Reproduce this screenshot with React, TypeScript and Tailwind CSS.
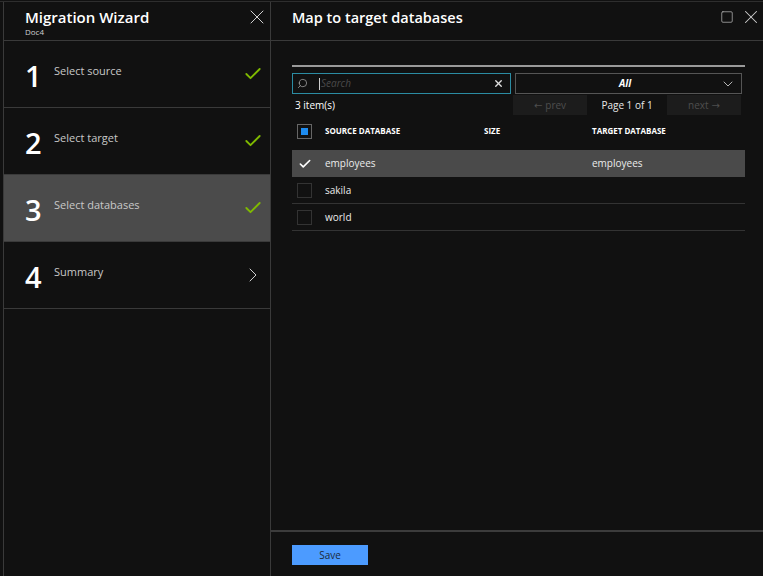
import { Check, ChevronRight, ChevronDown, X, Search, Square } from 'lucide-react';

const font = { fontFamily: '"Open Sans", "Noto Sans", sans-serif' };
const arrowFont = { fontFamily: '"DejaVu Sans", sans-serif' };

const steps = [
  { n: '1', label: 'Select source', done: true },
  { n: '2', label: 'Select target', done: true },
  { n: '3', label: 'Select databases', done: true, active: true },
  { n: '4', label: 'Summary', done: false },
];

const rows = [
  { name: 'employees', target: 'employees', checked: true },
  { name: 'sakila', target: '', checked: false },
  { name: 'world', target: '', checked: false },
];

export default function App() {
  return (
    <div className="w-[763px] h-[576px] bg-[#111111] pt-[1px] overflow-hidden text-white" style={font}>
      <div className="h-full flex border-t border-[#2e2e2e]">
        {/* Wizard steps */}
        <div className="w-[271px] pl-[3px] flex">
          <div className="flex-1 flex flex-col border-l border-r border-[#3a3a3a]">
            <div className="h-[39px] border-b border-[#3a3a3a] flex justify-between pl-[21px] pr-[1px]">
              <div className="pt-[5px]">
                <div className="text-[15px] font-semibold leading-[20px]">Migration Wizard</div>
                <div className="text-[8px] leading-[9px] text-[#cfcfcf]">Doc4</div>
              </div>
              <X size={24} strokeWidth={1} className="mt-[3px] text-[#d0d0d0]" />
            </div>
            {steps.map((s) => (
              <div
                key={s.n}
                className={`h-[67px] border-b border-[#3a3a3a] flex items-center pl-[21px] pr-[7px] ${s.active ? 'bg-[#4b4b4b]' : ''}`}
              >
                <div className="w-[29px] text-[29px] font-semibold leading-none pt-[2px]">{s.n}</div>
                <div className="flex-1 text-[11px] text-[#c8c8c8] pb-[6px]">{s.label}</div>
                {s.done ? (
                  <Check size={20} strokeWidth={2.2} className="text-[#7fba00]" />
                ) : (
                  <ChevronRight size={24} strokeWidth={1} className="text-[#d0d0d0] -mr-[2px]" />
                )}
              </div>
            ))}
          </div>
        </div>

        {/* Map panel */}
        <div className="flex-1 flex flex-col">
          <div className="h-[39px] border-b border-[#3a3a3a] flex justify-between items-start pl-[21px] pr-[1px]">
            <div className="text-[14.5px] font-semibold leading-[20px] pt-[6px]">Map to target databases</div>
            <div className="flex items-center gap-[2px] pt-[4px]">
              <Square size={14} strokeWidth={1.1} className="text-[#cfcfcf]" />
              <X size={22} strokeWidth={1.1} className="text-[#cfcfcf] ml-[4px]" />
            </div>
          </div>

          <div className="flex-1 pl-[21px] pr-[18px] pt-[24px]">
            <div className="h-[2px] bg-[#9a9a9a]" />

            <div className="flex gap-[4px] mt-[6px] h-[21px]">
              <div className="w-[219px] border border-[#2b8ca3] flex items-center pl-[4px] pr-[6px]">
                <Search size={11} strokeWidth={1.6} className="text-[#a8a8a8] -scale-x-100" />
                <div className="w-px h-[12px] bg-[#cfcfcf] ml-[11px]" />
                <span className="flex-1 text-[10px] italic text-[#4a4a4a] ml-[1px]">Search</span>
                <X size={11} strokeWidth={3} className="text-[#e0e0e0]" />
              </div>
              <div className="w-[227px] border border-[#555555] flex items-center pr-[5px]">
                <span className="flex-1 text-center text-[10px] font-bold italic pl-[14px]">All</span>
                <ChevronDown size={16} strokeWidth={1.3} className="text-[#d0d0d0]" />
              </div>
            </div>

            <div className="flex items-center mt-[1px] h-[20px]">
              <span className="text-[10px] pl-[3px]">3 item(s)</span>
              <div className="ml-auto mr-[4px] flex">
                <div className="w-[74px] h-[20px] bg-[#1c1c1c] flex items-center justify-center gap-[3px] text-[10px] text-[#4e4e4e]">
                  <span style={arrowFont}>←</span>
                  <span>prev</span>
                </div>
                <div className="w-[80px] flex items-center justify-center text-[10px] text-[#e8e8e8]">Page 1 of 1</div>
                <div className="w-[74px] h-[20px] bg-[#1c1c1c] flex items-center justify-center gap-[3px] text-[10px] text-[#4e4e4e]">
                  <span>next</span>
                  <span style={arrowFont}>→</span>
                </div>
              </div>
            </div>

            <div className="flex items-center h-[30px] mt-[1px] text-[8px] font-bold uppercase">
              <div className="w-[33px] pl-[5px]">
                <div className="w-[15px] h-[15px] border border-[#666666] flex items-center justify-center">
                  <div className="w-[7px] h-[7px] bg-[#1e8cf0]" />
                </div>
              </div>
              <div className="w-[159px]">Source Database</div>
              <div className="w-[108px]">Size</div>
              <div>Target Database</div>
            </div>

            <div className="mt-[4px]">
              {rows.map((r) => (
                <div
                  key={r.name}
                  className={`flex items-center h-[27px] text-[10px] ${r.checked ? 'bg-[#4a4a4a]' : 'border-b border-[#333333]'}`}
                >
                  <div className="w-[33px] pl-[5px]">
                    {r.checked ? (
                      <Check size={14} strokeWidth={2.8} className="ml-[1px] text-white" />
                    ) : (
                      <div className="w-[15px] h-[15px] border border-[#333333]" />
                    )}
                  </div>
                  <div className="w-[159px] text-[#ececec]">{r.name}</div>
                  <div className="w-[108px]" />
                  <div className="text-[#ececec]">{r.target}</div>
                </div>
              ))}
            </div>
          </div>

          <div className="h-[46px] border-t-2 border-[#3c3c3c] pl-[21px] pt-[13px]">
            <button className="block w-[76px] h-[20px] bg-[#4c9bff] text-[10px] text-[#1b2a3a]">Save</button>
          </div>
        </div>
      </div>
    </div>
  );
}
